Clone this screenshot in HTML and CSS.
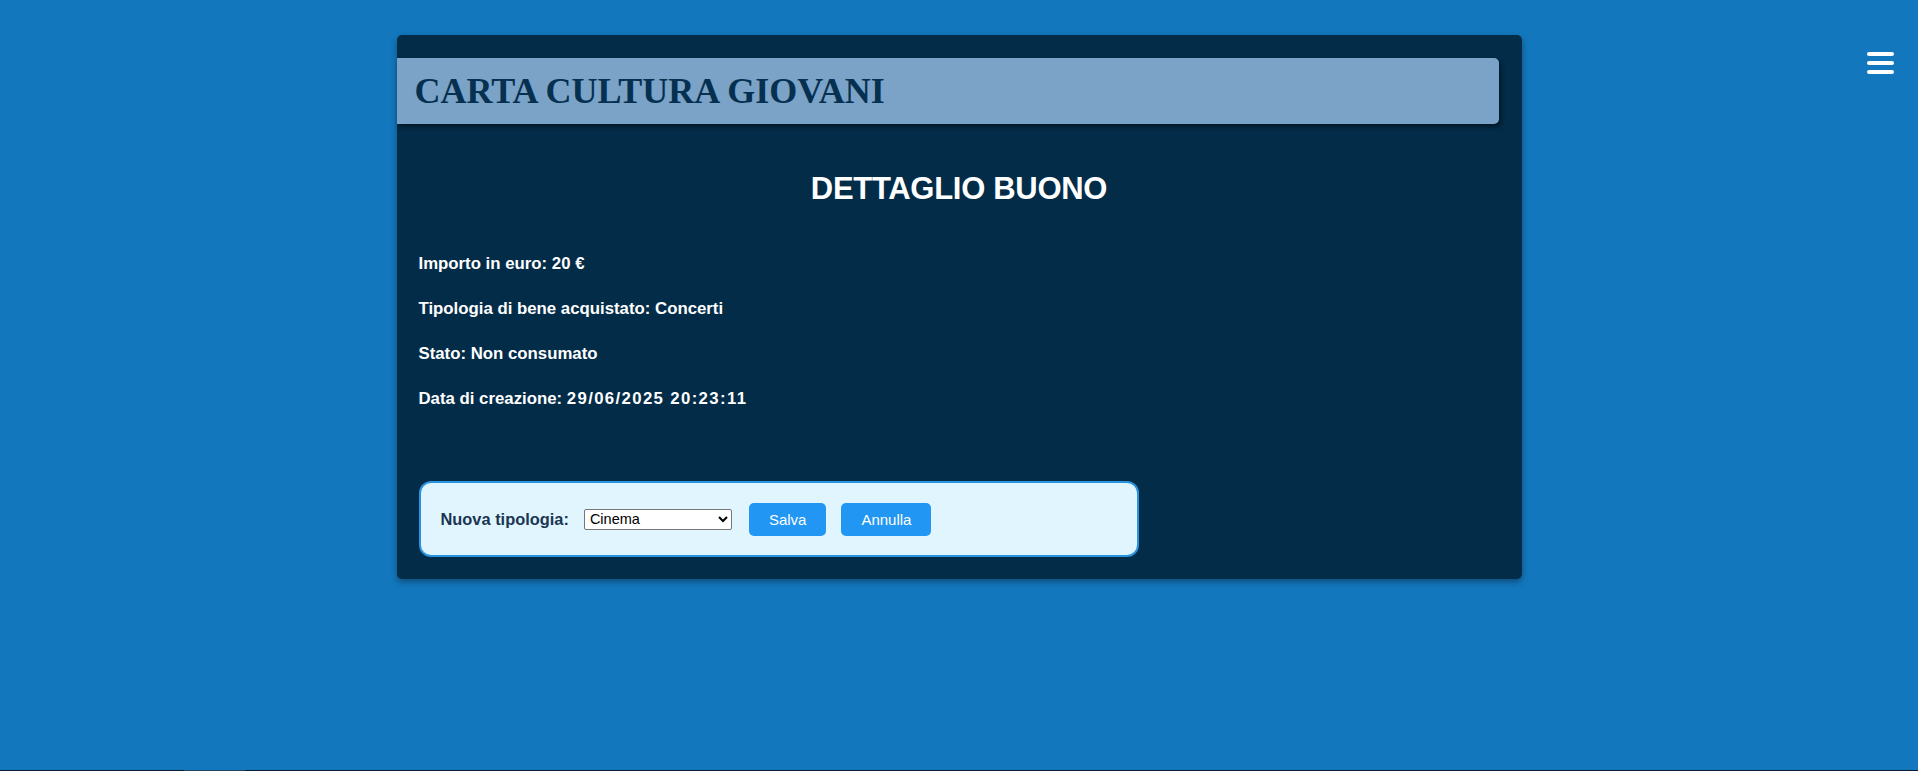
FILE: index.html
```html
<!DOCTYPE html>
<html lang="it">
<head>
<meta charset="utf-8">
<title>Carta Cultura Giovani - Dettaglio Buono</title>
<link rel="stylesheet" href="styles.css">
</head>
<body>
<div class="page">
  <button class="menu-btn" aria-label="Menu">
    <span class="bar"></span><span class="bar"></span><span class="bar"></span>
  </button>
  <main class="card">
    <header class="header">
      <h1 class="brand">CARTA CULTURA GIOVANI</h1>
    </header>
    <section class="content">
      <h2 class="title">DETTAGLIO BUONO</h2>
      <p class="info">Importo in euro: 20 €</p>
      <p class="info">Tipologia di bene acquistato: Concerti</p>
      <p class="info">Stato: Non consumato</p>
      <p class="info">Data di creazione: <span class="num">29/06/2025 20:23:11</span></p>
      <form class="edit-box">
        <label class="edit-label" for="tipologia">Nuova tipologia:</label>
        <select class="edit-select" id="tipologia">
          <option>Cinema</option>
          <option>Concerti</option>
          <option>Libri</option>
          <option>Musei</option>
          <option>Teatro</option>
        </select>
        <button type="button" class="btn btn-save">Salva</button>
        <button type="button" class="btn">Annulla</button>
      </form>
    </section>
  </main>
  <div class="bottom-line"><span class="bottom-seg"></span></div>
</div>
</body>
</html>
```
FILE: styles.css
```css
html, body {
  margin: 0;
  padding: 0;
}

body {
  background: #1377bd;
  font-family: "Liberation Sans", Arial, sans-serif;
  color: #ffffff;
}

.page {
  min-height: 100vh;
  display: flex;
  flex-direction: column;
  position: relative;
}

.menu-btn {
  position: absolute;
  top: 52px;
  right: 24px;
  width: 27px;
  padding: 0;
  border: none;
  background: transparent;
  display: flex;
  flex-direction: column;
  gap: 5px;
  cursor: pointer;
}

.menu-btn .bar {
  display: block;
  width: 27px;
  height: 4px;
  border-radius: 2px;
  background: #ffffff;
}

.card {
  width: 1125px;
  margin: 35px auto 0;
  padding: 23px 0 22px;
  box-sizing: border-box;
  background: #032c48;
  border-radius: 5px;
  box-shadow: 0 3px 6px rgba(0, 0, 0, 0.35);
}

.header {
  width: 98%;
  height: 66px;
  box-sizing: border-box;
  padding-left: 18px;
  background: #7ba2c7;
  border-radius: 0 5px 5px 0;
  box-shadow: 2px 3px 4px rgba(0, 0, 0, 0.45);
}

.brand {
  margin: 0;
  font-family: "Liberation Serif", "Times New Roman", serif;
  font-weight: bold;
  font-size: 36px;
  line-height: 66px;
  color: #06304f;
  white-space: nowrap;
}

.content {
  padding: 0 22px;
}

.title {
  margin: 47px 0 0;
  text-align: center;
  font-size: 31px;
  line-height: 36px;
  letter-spacing: -0.3px;
  font-weight: bold;
  color: #ffffff;
}

.info {
  margin: 25px 0 0;
  font-size: 16.8px;
  line-height: 20px;
  font-weight: bold;
}

.title + .info {
  margin-top: 47px;
}

.num {
  letter-spacing: 1.35px;
}

.edit-box {
  margin-top: 72px;
  width: 720px;
  height: 76px;
  box-sizing: border-box;
  padding: 0 20px;
  display: flex;
  align-items: center;
  background: #e0f5fe;
  border: 2px solid #2a93e0;
  border-radius: 12px;
}

.edit-label {
  margin-right: 15px;
  font-size: 16.4px;
  font-weight: bold;
  color: #1b3553;
  white-space: nowrap;
}

.edit-select {
  width: 148px;
  height: 21px;
  margin-right: 17px;
  font-family: "Liberation Sans", Arial, sans-serif;
  font-size: 14.5px;
  color: #000000;
  background: #ffffff;
  border: 1px solid #767676;
  border-radius: 2px;
  padding: 0 0 0 1px;
}

.btn {
  height: 33px;
  padding: 0 20px;
  border: none;
  border-radius: 5px;
  background: #2196f3;
  color: #ffffff;
  font-family: "Liberation Sans", Arial, sans-serif;
  font-size: 15px;
  cursor: pointer;
}

.btn-save {
  margin-right: 15px;
}

.bottom-line {
  margin-top: auto;
  height: 1px;
  background: #0a1c30;
  display: flex;
}

.bottom-seg {
  margin-left: 184px;
  width: 61px;
  background: #1f4566;
}
```
